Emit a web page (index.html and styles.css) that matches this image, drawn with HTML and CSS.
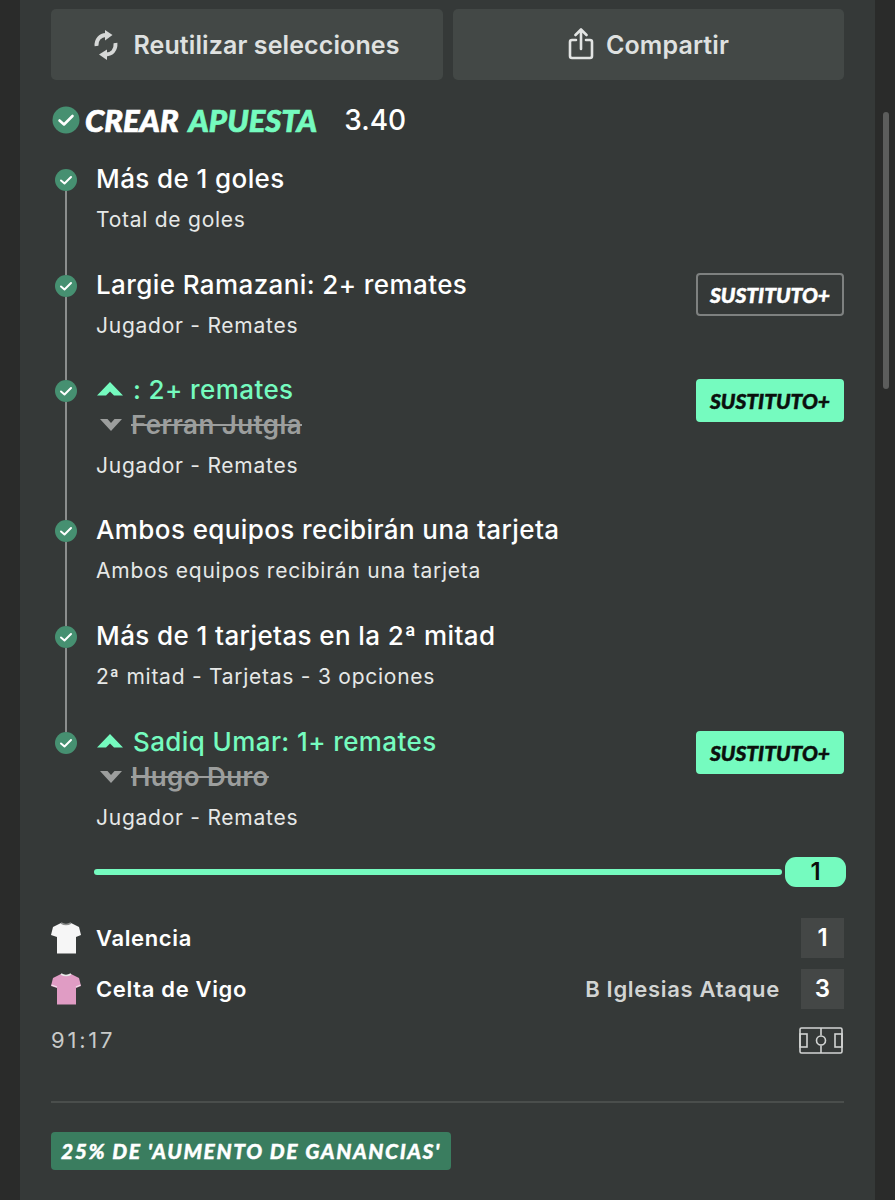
FILE: index.html
```html
<!DOCTYPE html>
<html lang="es">

<head>
    <meta charset="UTF-8">
    <title>Crear apuesta</title>
    <link rel="stylesheet" href="styles.css">
</head>

<body>
    <div class="panel">
        <div class="actions">
            <button class="action-button">
                <svg class="icon-reuse" viewBox="0 0 24 30" fill="none" stroke="#d6d8d7" stroke-width="3.8">
                    <path d="M2.5 16C2 10 6 5 12 5" />
                    <path d="M21.5 13C22 20 18 24.5 12 24.5" />
                    <path d="M11 0L11 10.5L18.5 5Z" fill="#d6d8d7" stroke="none" />
                    <path d="M13 19.5L13 30L5 24.5Z" fill="#d6d8d7" stroke="none" />
                </svg>
                Reutilizar selecciones
            </button>
            <button class="action-button share">
                <svg class="icon-share" viewBox="0 0 26 32" fill="none" stroke="#e2e4e3" stroke-width="2.6" stroke-linecap="round" stroke-linejoin="round">
                    <path d="M8 12H4Q2 12 2 14V28Q2 30 4 30H22Q24 30 24 28V14Q24 12 22 12H18" />
                    <path d="M13 21V2M7.5 7L13 1.5L18.5 7" />
                </svg>
                Compartir
            </button>
        </div>

        <div class="bet-title">
            <svg class="check-big" viewBox="0 0 28 28">
                <circle cx="14" cy="14" r="13.5" fill="#469071" />
                <path d="M7.5 14.5L12 18.5L20.5 10" fill="none" stroke="#fff" stroke-width="2.6" stroke-linecap="round" stroke-linejoin="round" />
            </svg>
            <h2>CREAR <span class="green">APUESTA</span></h2>
            <span class="odds">3.40</span>
        </div>

        <div class="timeline">
            <div class="leg">
                <div class="marker">
                    <svg class="check" viewBox="0 0 22 22"><circle cx="11" cy="11" r="11" fill="#469071" /><path d="M6 11.5L9.5 14.5L16 8" fill="none" stroke="#fff" stroke-width="2" stroke-linecap="round" stroke-linejoin="round" /></svg>
                    <div class="line"></div>
                </div>
                <div class="leg-text">
                    <div class="leg-name">Más de 1 goles</div>
                    <div class="leg-sub">Total de goles</div>
                </div>
            </div>

            <div class="leg tight">
                <div class="marker">
                    <svg class="check" viewBox="0 0 22 22"><circle cx="11" cy="11" r="11" fill="#469071" /><path d="M6 11.5L9.5 14.5L16 8" fill="none" stroke="#fff" stroke-width="2" stroke-linecap="round" stroke-linejoin="round" /></svg>
                    <div class="line"></div>
                </div>
                <div class="leg-text">
                    <div class="leg-name">Largie Ramazani: 2+ remates</div>
                    <div class="leg-sub">Jugador - Remates</div>
                </div>
                <div class="sub-badge">SUSTITUTO+</div>
            </div>

            <div class="leg tight">
                <div class="marker">
                    <svg class="check" viewBox="0 0 22 22"><circle cx="11" cy="11" r="11" fill="#469071" /><path d="M6 11.5L9.5 14.5L16 8" fill="none" stroke="#fff" stroke-width="2" stroke-linecap="round" stroke-linejoin="round" /></svg>
                    <div class="line"></div>
                </div>
                <div class="leg-text">
                    <div class="leg-name sub-in">
                        <svg class="arrow-up" viewBox="0 0 26 14"><path d="M13 0L26 13.5H17L13 9.5L9 13.5H0Z" fill="#75fbbf" /></svg>
                        <span>: 2+ remates</span>
                    </div>
                    <div class="sub-out">
                        <svg class="arrow-down" viewBox="0 0 22 13"><path d="M11 13L22 1H14.5L11 5L7.5 1H0Z" fill="#9c9e9d" /></svg>
                        <s>Ferran Jutgla</s>
                    </div>
                    <div class="leg-sub">Jugador - Remates</div>
                </div>
                <div class="sub-badge active">SUSTITUTO+</div>
            </div>

            <div class="leg">
                <div class="marker">
                    <svg class="check" viewBox="0 0 22 22"><circle cx="11" cy="11" r="11" fill="#469071" /><path d="M6 11.5L9.5 14.5L16 8" fill="none" stroke="#fff" stroke-width="2" stroke-linecap="round" stroke-linejoin="round" /></svg>
                    <div class="line"></div>
                </div>
                <div class="leg-text">
                    <div class="leg-name">Ambos equipos recibirán una tarjeta</div>
                    <div class="leg-sub">Ambos equipos recibirán una tarjeta</div>
                </div>
            </div>

            <div class="leg">
                <div class="marker">
                    <svg class="check" viewBox="0 0 22 22"><circle cx="11" cy="11" r="11" fill="#469071" /><path d="M6 11.5L9.5 14.5L16 8" fill="none" stroke="#fff" stroke-width="2" stroke-linecap="round" stroke-linejoin="round" /></svg>
                    <div class="line"></div>
                </div>
                <div class="leg-text">
                    <div class="leg-name">Más de 1 tarjetas en la 2ª mitad</div>
                    <div class="leg-sub">2ª mitad - Tarjetas - 3 opciones</div>
                </div>
            </div>

            <div class="leg last">
                <div class="marker">
                    <svg class="check" viewBox="0 0 22 22"><circle cx="11" cy="11" r="11" fill="#469071" /><path d="M6 11.5L9.5 14.5L16 8" fill="none" stroke="#fff" stroke-width="2" stroke-linecap="round" stroke-linejoin="round" /></svg>
                </div>
                <div class="leg-text">
                    <div class="leg-name sub-in">
                        <svg class="arrow-up" viewBox="0 0 26 14"><path d="M13 0L26 13.5H17L13 9.5L9 13.5H0Z" fill="#75fbbf" /></svg>
                        <span>Sadiq Umar: 1+ remates</span>
                    </div>
                    <div class="sub-out">
                        <svg class="arrow-down" viewBox="0 0 22 13"><path d="M11 13L22 1H14.5L11 5L7.5 1H0Z" fill="#9c9e9d" /></svg>
                        <s>Hugo Duro</s>
                    </div>
                    <div class="leg-sub">Jugador - Remates</div>
                </div>
                <div class="sub-badge active">SUSTITUTO+</div>
            </div>
        </div>

        <div class="progress">
            <div class="progress-bar"></div>
            <div class="progress-thumb">1</div>
        </div>

        <div class="teams">
            <div class="team">
                <svg class="shirt" viewBox="0 0 30 32">
                    <path d="M10 1L2 5L0 13L6 15V31.5H25V15L30 13L28 5L20 1Q15 4 10 1Z" fill="#f6f6f6" />
                    <path d="M10 1Q15 4 20 1" fill="none" stroke="#8d8f8e" stroke-width="1.5" />
                </svg>
                <span class="team-name">Valencia</span>
                <span class="score">1</span>
            </div>
            <div class="team">
                <svg class="shirt" viewBox="0 0 30 32">
                    <path d="M10 1L2 5L0 13L6 15V31.5H25V15L30 13L28 5L20 1Q15 4 10 1Z" fill="#e09cc4" />
                    <path d="M10 1Q15 4 20 1" fill="none" stroke="#e8e8e8" stroke-width="1.5" />
                    <path d="M0.5 12L6 14M29.5 12L25 14" fill="none" stroke="#f0e6ec" stroke-width="1.2" />
                </svg>
                <span class="team-name">Celta de Vigo</span>
                <span class="last-event">B Iglesias Ataque</span>
                <span class="score">3</span>
            </div>
            <div class="match-info">
                <span class="clock">91:17</span>
                <svg class="pitch" viewBox="0 0 44 27" fill="none" stroke="#d2d4d3" stroke-width="1.6">
                    <rect x="1" y="1" width="42" height="25" rx="1.5" />
                    <path d="M22 1V8.5M22 18.5V26" />
                    <circle cx="22" cy="13.5" r="4.5" />
                    <rect x="1" y="7" width="7" height="13" />
                    <rect x="36" y="7" width="7" height="13" />
                </svg>
            </div>
        </div>

        <div class="promo-section">
            <div class="promo">25% DE 'AUMENTO DE GANANCIAS'</div>
        </div>
    </div>

    <div class="scrollbar"></div>
</body>

</html>
```

FILE: styles.css
```css
body {
    font-family: Inter, "Liberation Sans", sans-serif;
    margin: 0;
    padding: 0;
    height: 1200px;
    overflow: hidden;
    background-color: #2a2b2a;
    color: white;
}

.panel {
    margin: 0 20px;
    height: 1200px;
    box-sizing: border-box;
    padding: 9px 31px 0;
    background-color: #353938;
}

.actions {
    display: grid;
    grid-template-columns: 392px 391px;
    gap: 10px;
}

.action-button {
    height: 71px;
    display: flex;
    align-items: center;
    justify-content: center;
    gap: 15px;
    border: none;
    border-radius: 5px;
    background-color: #434846;
    color: #dfe1e0;
    font-family: Inter, sans-serif;
    font-size: 25px;
    font-weight: 600;
    letter-spacing: 0.1px;
}

.action-button.share {
    gap: 12px;
}

.icon-reuse {
    width: 24px;
    height: 30px;
}

.icon-share {
    width: 26px;
    height: 32px;
    margin-top: -2px;
}

.bet-title {
    display: flex;
    align-items: center;
    height: 40px;
    margin-top: 20px;
}

.check-big {
    width: 28px;
    height: 28px;
    margin-left: 1px;
}

.bet-title h2 {
    margin: 0 0 0 5px;
    font-family: Lato, sans-serif;
    font-size: 31px;
    font-weight: 900;
    font-style: italic;
    word-spacing: 4px;
    -webkit-text-stroke: 0.7px currentColor;
    white-space: pre;
}

.green {
    color: #75fbbf;
}

.odds {
    margin-left: 27px;
    font-size: 28px;
    font-weight: 500;
}

.timeline {
    margin-top: 29px;
}

.leg {
    display: grid;
    grid-template-columns: 45px 1fr auto;
    align-items: start;
}

.marker {
    align-self: stretch;
    display: flex;
    flex-direction: column;
    padding-left: 4px;
}

.check {
    width: 22px;
    height: 22px;
    flex: none;
}

.line {
    flex: 1;
    width: 2px;
    margin-left: 10px;
    background-color: #8b8e8d;
}

.leg-text {
    margin-top: -1px;
    padding-bottom: 45px;
}

.leg.tight .leg-text {
    padding-bottom: 44px;
}

.leg.last .leg-text {
    padding-bottom: 0;
}

.leg-name {
    display: flex;
    align-items: center;
    gap: 10px;
    height: 20px;
    font-size: 26px;
    font-weight: 500;
    letter-spacing: 0.4px;
    white-space: nowrap;
}

.sub-in {
    color: #75fbbf;
}

.sub-out {
    display: flex;
    align-items: center;
    gap: 9px;
    height: 20px;
    margin-top: 15px;
    padding-left: 4px;
    color: #9c9e9d;
    font-size: 26px;
    font-weight: 600;
    letter-spacing: 0.4px;
}

.arrow-up {
    width: 26px;
    height: 14px;
    margin-left: 1px;
}

.arrow-down {
    width: 22px;
    height: 13px;
}

.leg-sub {
    margin-top: 22px;
    line-height: 20px;
    font-size: 21px;
    letter-spacing: 0.75px;
    color: #e6e8e7;
}

.sub-badge {
    width: 148px;
    height: 43px;
    box-sizing: border-box;
    margin-top: -2px;
    display: flex;
    align-items: center;
    justify-content: center;
    border: 2px solid #7e8180;
    border-radius: 4px;
    font-family: Lato, sans-serif;
    font-size: 21px;
    font-weight: 900;
    font-style: italic;
    -webkit-text-stroke: 0.5px currentColor;
}

.sub-badge.active {
    margin-top: -1px;
    background-color: #75fbbf;
    border-color: #75fbbf;
    color: #0b0f0d;
}

.progress {
    display: flex;
    align-items: center;
    gap: 3px;
    margin: 29px -2px 0 43px;
}

.progress-bar {
    flex: 1;
    height: 6px;
    border-radius: 3px;
    background-color: #75fbbf;
}

.progress-thumb {
    width: 61px;
    height: 30px;
    border-radius: 11px;
    background-color: #75fbbf;
    color: #0b0f0d;
    font-size: 24px;
    font-weight: 600;
    line-height: 30px;
    text-align: center;
}

.teams {
    margin-top: 31px;
}

.team {
    display: flex;
    align-items: center;
    height: 40px;
    margin-bottom: 11px;
}

.shirt {
    width: 30px;
    height: 32px;
    margin-right: 15px;
}

.team-name {
    flex: 1;
    font-size: 22px;
    font-weight: 600;
    letter-spacing: 0.65px;
}

.last-event {
    margin-right: 21px;
    font-size: 22px;
    font-weight: 600;
    color: #d2d4d3;
    letter-spacing: 0.7px;
}

.score {
    width: 43px;
    height: 40px;
    background-color: #444746;
    font-size: 24px;
    font-weight: 600;
    line-height: 40px;
    text-align: center;
}

.match-info {
    display: flex;
    align-items: center;
    justify-content: space-between;
    height: 28px;
    margin-top: 17px;
}

.clock {
    font-size: 22px;
    letter-spacing: 2.8px;
    color: #c8cac9;
}

.pitch {
    width: 44px;
    height: 27px;
    margin-right: 1px;
}

.promo-section {
    margin-top: 47px;
    border-top: 2px solid #4a4e4c;
    padding-top: 29px;
}

.promo {
    display: inline-block;
    height: 38px;
    padding: 0 10px;
    border-radius: 4px;
    background-color: #3a7d5f;
    font-family: Lato, sans-serif;
    font-size: 21px;
    font-weight: 900;
    font-style: italic;
    letter-spacing: 1.6px;
    line-height: 38px;
    -webkit-text-stroke: 0.4px currentColor;
}

/* barra de scroll encima de todo */
.scrollbar {
    position: absolute;
    top: 112px;
    left: 883px;
    width: 6px;
    height: 277px;
    border-radius: 3px;
    background-color: #5c5d5c;
}
```
